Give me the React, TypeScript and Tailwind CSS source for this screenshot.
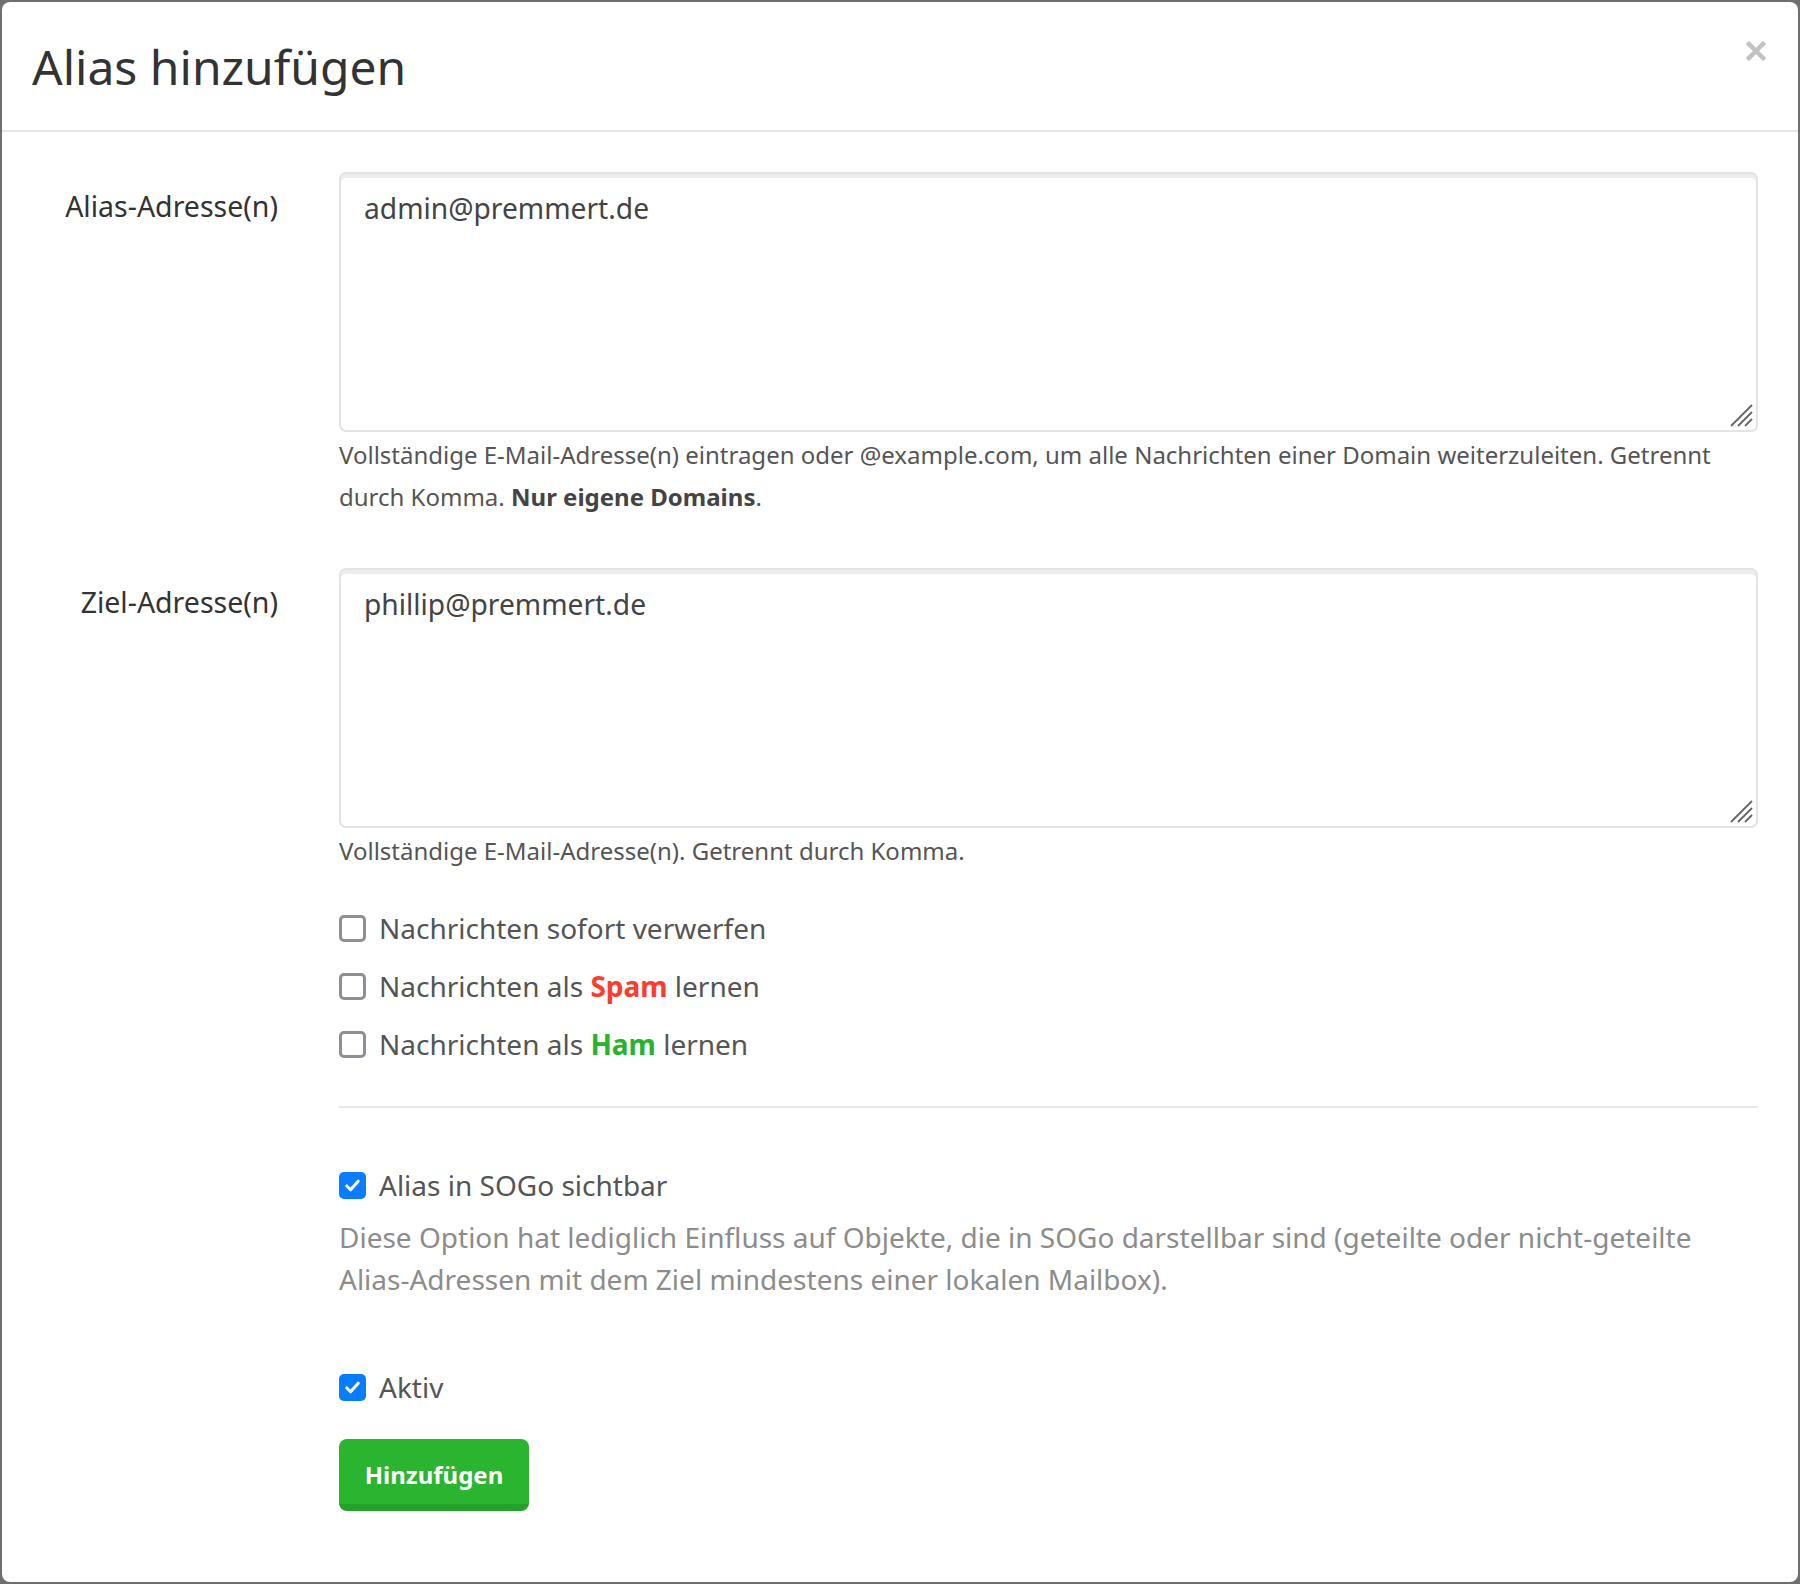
import React from 'react'

const font = { fontFamily: '"Noto Sans", "Open Sans", sans-serif' }

function Box({ checked }: { checked?: boolean }) {
  if (checked) {
    return (
      <span className="flex h-[27px] w-[27px] shrink-0 items-center justify-center rounded-[5px] bg-[#0a7cff]">
        <svg width="19" height="19" viewBox="0 0 20 20" fill="none">
          <path d="M4 10.5l4 4 8-9" stroke="#fff" strokeWidth="3.2" strokeLinecap="round" strokeLinejoin="round" />
        </svg>
      </span>
    )
  }
  return <span className="block h-[27px] w-[27px] shrink-0 rounded-[5px] border-[3px] border-[#8e8e96] bg-white" />
}

function CheckRow({ checked, children }: { checked?: boolean; children: React.ReactNode }) {
  return (
    <label className="flex h-[58px] items-center gap-[13px] text-[28px] text-[#555]">
      <Box checked={checked} />
      <span>{children}</span>
    </label>
  )
}

function Field({ label, value, children }: { label: string; value: string; children: React.ReactNode }) {
  return (
    <div className="flex">
      <div className="w-[276px] shrink-0 pt-[16px] text-right text-[28.5px] leading-[36px] text-[#333]">{label}</div>
      <div className="ml-[61px] w-[1419px]">
        <div className="relative">
          <textarea
            readOnly
            defaultValue={value}
            className="block h-[260px] w-full resize-none rounded-[7px] border-2 border-[#e3e3e3] bg-white px-[23px] pt-[16px] text-[28.2px] leading-[36px] text-[#444] shadow-[inset_0_4px_0_#ececec] outline-none"
          />
          {/* resize grip */}
          <svg width="24" height="24" viewBox="0 0 24 24" className="absolute bottom-[5px] right-[5px]">
            <path d="M23 2L2 23M23 9L9 23M23 16L16 23" stroke="#666" strokeWidth="1.8" />
          </svg>
        </div>
        {children}
      </div>
    </div>
  )
}

export default function App() {
  return (
    <div className="h-[1584px] w-[1800px] bg-[#6f6f6f] pl-[2px] pt-[2px]" style={font}>
      <div className="h-[1580px] w-[1796px] rounded-[8px] bg-white">
        {/* Header */}
        <div className="flex h-[130px] items-center justify-between border-b-2 border-[#e5e5e5] pl-[30px] pr-[32px]">
          <h1 className="pt-[2px] text-[48px] leading-none text-[#333]">Alias hinzufügen</h1>
          <svg width="20" height="20" viewBox="0 0 20 20" className="-mt-[30px]">
            <path d="M3 3l14 14M17 3L3 17" stroke="#c2c2c2" strokeWidth="4.5" strokeLinecap="square" />
          </svg>
        </div>

        {/* Body */}
        <div className="pt-[40px]">
          <Field label="Alias-Adresse(n)" value="admin@premmert.de">
            <p className="mt-[2px] text-[24px] leading-[42px] text-[#555]">
              Vollständige E-Mail-Adresse(n) eintragen oder @example.com, um alle Nachrichten einer Domain weiterzuleiten. Getrennt
              durch Komma. <b className="font-bold text-[#444]">Nur eigene Domains</b>.
            </p>
          </Field>

          <div className="mt-[50px]">
            <Field label="Ziel-Adresse(n)" value="phillip@premmert.de">
              <p className="mt-[2px] text-[24px] leading-[42px] text-[#555]">
                Vollständige E-Mail-Adresse(n). Getrennt durch Komma.
              </p>
            </Field>
          </div>

          <div className="ml-[337px] w-[1419px]">
            <div className="mt-[27px]">
              <CheckRow>Nachrichten sofort verwerfen</CheckRow>
              <CheckRow>
                Nachrichten als <b className="font-bold text-[#ff3b30]">Spam</b> lernen
              </CheckRow>
              <CheckRow>
                Nachrichten als <b className="font-bold text-[#28b22d]">Ham</b> lernen
              </CheckRow>
            </div>

            <hr className="mt-[33px] border-t-2 border-[#e8e8e8]" />

            <div className="mt-[57px] flex h-[40px] items-center gap-[13px] text-[28px] text-[#555]">
              <Box checked />
              <span>Alias in SOGo sichtbar</span>
            </div>
            <p className="mt-[11px] text-[28px] leading-[42px] text-[#8c8c8c]">
              Diese Option hat lediglich Einfluss auf Objekte, die in SOGo darstellbar sind (geteilte oder nicht-geteilte
              Alias-Adressen mit dem Ziel mindestens einer lokalen Mailbox).
            </p>

            <div className="mt-[67px] flex h-[40px] items-center gap-[13px] text-[28px] text-[#555]">
              <Box checked />
              <span>Aktiv</span>
            </div>

            <button className="mt-[32px] h-[72px] w-[190px] rounded-[8px] border-b-[7px] border-[#23a128] bg-[#2ab42f] pt-[6px] text-[24px] font-bold text-white">
              Hinzufügen
            </button>
          </div>
        </div>
      </div>
    </div>
  )
}
